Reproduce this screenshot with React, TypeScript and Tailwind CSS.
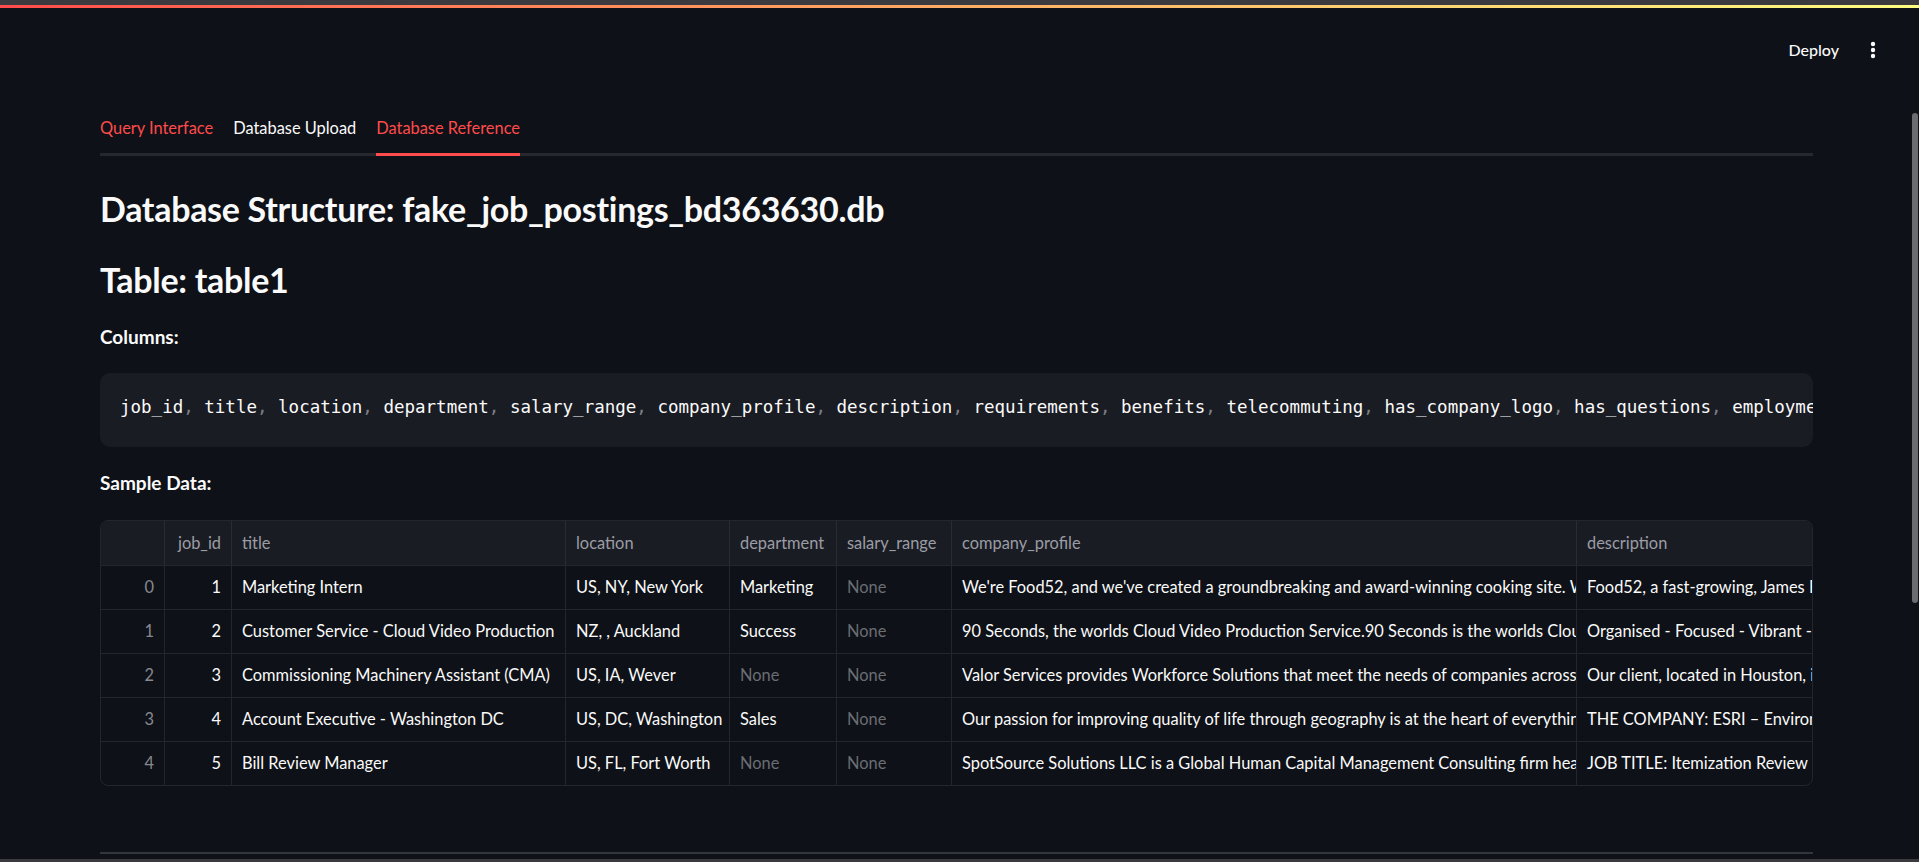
import React from "react";

const cols = [
  { key: "idx", label: "", w: 64, num: true, idx: true },
  { key: "job_id", label: "job_id", w: 67, num: true },
  { key: "title", label: "title", w: 334 },
  { key: "location", label: "location", w: 164 },
  { key: "department", label: "department", w: 107 },
  { key: "salary_range", label: "salary_range", w: 115 },
  { key: "company_profile", label: "company_profile", w: 625 },
  { key: "description", label: "description", w: 400 },
];

type Row = Record<string, string | null>;

const rows: Row[] = [
  {
    idx: "0",
    job_id: "1",
    title: "Marketing Intern",
    location: "US, NY, New York",
    department: "Marketing",
    salary_range: null,
    company_profile:
      "We're Food52, and we've created a groundbreaking and award-winning cooking site. We support, connect, and celebrate home cooks",
    description:
      "Food52, a fast-growing, James Beard Award-winning online food community and crowd-sourced",
  },
  {
    idx: "1",
    job_id: "2",
    title: "Customer Service - Cloud Video Production",
    location: "NZ, , Auckland",
    department: "Success",
    salary_range: null,
    company_profile:
      "90 Seconds, the worlds Cloud Video Production Service.90 Seconds is the worlds Cloud Video Production Service enabling",
    description: "Organised - Focused - Vibrant - Awesome!Do you have a passion for customer service?",
  },
  {
    idx: "2",
    job_id: "3",
    title: "Commissioning Machinery Assistant (CMA)",
    location: "US, IA, Wever",
    department: null,
    salary_range: null,
    company_profile:
      "Valor Services provides Workforce Solutions that meet the needs of companies across the Private Sector",
    description: "Our client, located in Houston, is actively seeking an experienced Commissioning",
  },
  {
    idx: "3",
    job_id: "4",
    title: "Account Executive - Washington DC",
    location: "US, DC, Washington",
    department: "Sales",
    salary_range: null,
    company_profile:
      "Our passion for improving quality of life through geography is at the heart of everything we do.",
    description: "THE COMPANY: ESRI – Environmental Systems Research Institute",
  },
  {
    idx: "4",
    job_id: "5",
    title: "Bill Review Manager",
    location: "US, FL, Fort Worth",
    department: null,
    salary_range: null,
    company_profile:
      "SpotSource Solutions LLC is a Global Human Capital Management Consulting firm headquartered in Miami",
    description: "JOB TITLE: Itemization Review ManagerLOCATION: Fort Worth, TX",
  },
];

const codeCols = [
  "job_id",
  "title",
  "location",
  "department",
  "salary_range",
  "company_profile",
  "description",
  "requirements",
  "benefits",
  "telecommuting",
  "has_company_logo",
  "has_questions",
  "employment_type",
  "required_experience",
  "required_education",
  "industry",
  "function",
  "fraudulent",
];

export default function App() {
  return (
    <div className="relative h-[862px] w-[1919px] overflow-hidden bg-[#0e1117] font-['Lato',sans-serif] text-[#fafafa]">
      <div className="h-[5px] bg-[#3b3b3f]" />
      <div className="h-[3px] bg-gradient-to-r from-[#ff4b4b] to-[#fffd80]" />

      {/* header */}
      <div className="flex h-[84px] items-center justify-end pr-[43px]">
        <span className="text-[16px] font-medium text-[#fafafa]">Deploy</span>
        <svg width="6" height="18" viewBox="0 0 6 18" className="ml-[31px]">
          <circle cx="3" cy="3" r="2.2" fill="#fafafa" />
          <circle cx="3" cy="9" r="2.2" fill="#fafafa" />
          <circle cx="3" cy="15" r="2.2" fill="#fafafa" />
        </svg>
      </div>

      <div className="ml-[100px] w-[1713px]">
        {/* tabs */}
        <div className="mt-[11px] flex gap-[20px] border-b-[3px] border-[#26282e]">
          <div className="flex h-[50px] items-center pt-[1px] text-[16.4px] text-[#ff4b4b]">Query Interface</div>
          <div className="flex h-[50px] items-center pt-[1px] text-[16.4px] text-[#fafafa]">Database Upload</div>
          <div className="relative flex h-[50px] items-center pt-[1px] text-[16.4px] text-[#ff4b4b]">
            Database Reference
            <div className="absolute bottom-[-3px] left-0 right-0 h-[3px] bg-[#ff4b4b]" />
          </div>
        </div>

        <h3 className="mt-[32px] text-[34px] font-bold leading-[42px] tracking-[-0.3px]">
          Database Structure: fake_job_postings_bd363630.db
        </h3>
        <h3 className="mt-[29px] text-[34px] font-bold leading-[42px] tracking-[-0.3px]">Table: table1</h3>

        <div className="mt-[20px] text-[19px] font-bold leading-[32px]">Columns:</div>

        <div className="mt-[20px] flex h-[74px] items-center overflow-hidden rounded-[10px] bg-[#1a1c24] px-[20px] pb-[5px]">
          <div className="whitespace-nowrap font-['DejaVu_Sans_Mono',monospace] text-[17.5px] text-[#fafafa]">
            {codeCols.map((c, i) => (
              <span key={c}>
                {c}
                {i < codeCols.length - 1 && <span className="text-[#7d7f86]">, </span>}
              </span>
            ))}
          </div>
        </div>

        <div className="mt-[20px] text-[19px] font-bold leading-[32px]">Sample Data:</div>

        {/* table */}
        <div className="mt-[21px] overflow-hidden rounded-[8px] border border-[#24262d] text-[16.4px]">
          <div className="flex h-[44px] bg-[#1a1c24]">
            {cols.map((c) => (
              <div
                key={c.key}
                style={{ width: c.w, minWidth: c.w }}
                className={`flex items-center overflow-hidden whitespace-nowrap border-r border-[#2a2c33] px-[10px] text-[#9b9da4] ${
                  c.num ? "justify-end" : ""
                }`}
              >
                {c.label}
              </div>
            ))}
          </div>
          {rows.map((r) => (
            <div key={r.idx as string} className="flex h-[44px] border-t border-[#24262d]">
              {cols.map((c) => {
                const v = r[c.key];
                const muted = v === null || c.idx;
                return (
                  <div
                    key={c.key}
                    style={{ width: c.w, minWidth: c.w }}
                    className={`flex items-center overflow-hidden whitespace-nowrap border-r border-[#24262d] px-[10px] ${
                      c.num ? "justify-end" : ""
                    } ${v === null ? "text-[#6b6d74]" : muted ? "text-[#878991]" : "text-[#fafafa]"}`}
                  >
                    {v === null ? "None" : v}
                  </div>
                );
              })}
            </div>
          ))}
        </div>

        <div className="mt-[66px] h-[2px] bg-[#33353b]" />
      </div>

      {/* scrollbar */}
      <div className="absolute left-[1912px] top-[113px] h-[490px] w-[6px] rounded-[3px] bg-[#6b6b70]" />
      {/* bottom strip */}
      <div className="absolute bottom-0 left-0 h-[3px] w-full bg-[#3b3b3f]" />
    </div>
  );
}
